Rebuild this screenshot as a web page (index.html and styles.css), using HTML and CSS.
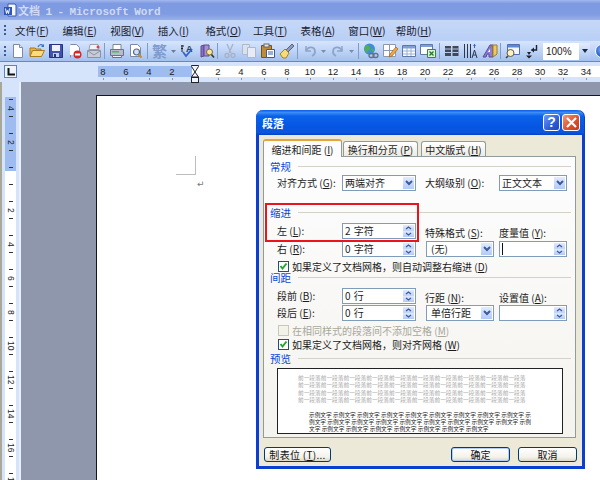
FILE: index.html
```html
<!DOCTYPE html>
<html lang="zh">
<head>
<meta charset="utf-8">
<title>文档 1 - Microsoft Word</title>
<link rel="stylesheet" href="styles.css">
</head>
<body>
<div class="word">
  <header class="titlebar">
    <svg class="app-icon" width="14" height="15" viewBox="0 0 14 15"><path d="M5 1h7l1 1v11H5z" fill="#f4f7ff" stroke="#3a5aa8"/><rect x="1" y="4" width="8" height="8" fill="#2f56b8"/><path d="M2.500 5.500l1 5 1-3 1 3 1-5" fill="none" stroke="#fff"/></svg>
    <span class="app-title">文档 1 - Microsoft Word</span>
  </header>

  <nav class="menubar">
    <span class="grip"></span>
    <span class="menu">文件(<u>F</u>)</span>
    <span class="menu">编辑(<u>E</u>)</span>
    <span class="menu">视图(<u>V</u>)</span>
    <span class="menu">插入(<u>I</u>)</span>
    <span class="menu">格式(<u>O</u>)</span>
    <span class="menu">工具(<u>T</u>)</span>
    <span class="menu">表格(<u>A</u>)</span>
    <span class="menu">窗口(<u>W</u>)</span>
    <span class="menu">帮助(<u>H</u>)</span>
  </nav>

  <div class="toolbar">
    <span class="grip grip-tool"></span>
    <span class="ic"><svg width="16" height="16" viewBox="0 0 16 16"><path d="M3.500 1.500h6l3 3v10h-9z" fill="#fff" stroke="#7c8aa8"/><path d="M9.500 1.500v3h3" fill="#dfe7f6" stroke="#7c8aa8"/></svg></span>
    <span class="ic"><svg width="16" height="16" viewBox="0 0 16 16"><path d="M1 13V5h5l1 1h5v2" fill="#e8b23c" stroke="#a87a1c"/><path d="M1 13.500l2.500-6h12l-3 6z" fill="#fbdc7c" stroke="#a87a1c"/><path d="M9 4c1-2.500 3-3 5-1.500" fill="none" stroke="#3d6fc4" stroke-width="1.300"/><path d="M15 1v3h-3z" fill="#3d6fc4"/></svg></span>
    <span class="ic"><svg width="16" height="16" viewBox="0 0 16 16"><path d="M1.500 1.500h13v13h-13z" fill="#4153ac" stroke="#27327c"/><rect x="4" y="2" width="8" height="6" fill="#eef1fb"/><rect x="5" y="10" width="6" height="4" fill="#c6cde8"/><rect x="6" y="11" width="2" height="3" fill="#27327c"/></svg></span>
    <span class="ic"><svg width="16" height="16" viewBox="0 0 16 16"><path d="M3.500 1.500h6l3 3v6h-9v4" fill="#fff" stroke="#7c8aa8"/><rect x="3" y="3" width="6" height="9" fill="#fff"/><circle cx="10.500" cy="11.500" r="4" fill="#d8282c"/><rect x="8" y="10.500" width="5" height="2" fill="#fff"/></svg></span>
    <span class="ic"><svg width="16" height="16" viewBox="0 0 16 16"><path d="M4 1.500h8l1 5H3z" fill="#f2f3f6" stroke="#9aa2b2"/><path d="M1.500 7.500h13v7h-13z" fill="#c8ccd6" stroke="#8a92a4"/><path d="M2 8l6 4 6-4" fill="none" stroke="#8a92a4"/><circle cx="12" cy="4" r="1.500" fill="#d8404c"/></svg></span>
    <span class="sp sp4"></span>
    <span class="ic"><svg width="16" height="16" viewBox="0 0 16 16"><path d="M4 1.500h8v5H4z" fill="#fff" stroke="#7f8797"/><path d="M1.500 6.500h13v6h-13z" fill="#b6bccb" stroke="#6a7284"/><rect x="3" y="8" width="7" height="1.500" fill="#4fb85c"/><path d="M3.500 12.500h9v2h-9z" fill="#eef0f5" stroke="#6a7284"/></svg></span>
    <span class="ic"><svg width="16" height="16" viewBox="0 0 16 16"><path d="M2.500 1.500h7l3 3v9h-10z" fill="#fff" stroke="#7c8aa8"/><circle cx="8.500" cy="9" r="3" fill="#cfe1f7" stroke="#5a6a88" stroke-width="1.200"/><path d="M10.500 11.500l3 3" stroke="#c98a2c" stroke-width="2"/></svg></span>
    <span class="sp"></span>
    <span class="ic ic-glyph">繁</span>
    <span class="ic-arrow"><svg width="5" height="3" viewBox="0 0 5 3"><path d="M0 0h5L2.500 3z" fill="#6a7c9c"/></svg></span>
    <span class="ic"><svg width="16" height="16" viewBox="0 0 16 16"><text x="6" y="9" class="svg-a">A</text><path d="M1 3h3M1 5.500h2M2 2v7" stroke="#222" fill="none"/><path d="M3 9l3 4 6-7" fill="none" stroke="#2f66c8" stroke-width="1.800"/></svg></span>
    <span class="ic"><svg width="16" height="16" viewBox="0 0 16 16"><path d="M2 3l3-1v11l-3 1z" fill="#8a70c0" stroke="#5d4a90"/><path d="M5 2h5v11H5z" fill="#a891d6" stroke="#5d4a90"/><circle cx="10.500" cy="9" r="3" fill="#f6e79a" stroke="#7c6a34"/><path d="M12.500 11.500l2.500 3" stroke="#333" stroke-width="1.600"/></svg></span>
    <span class="sp sp4"></span>
    <span class="ic"><svg width="16" height="16" viewBox="0 0 16 16"><path d="M5 1l4 9M11 1l-4 9" stroke="#a8b2c6" stroke-width="1.300" fill="none"/><circle cx="5" cy="12.500" r="2" fill="none" stroke="#a8b2c6" stroke-width="1.300"/><circle cx="11" cy="12.500" r="2" fill="none" stroke="#a8b2c6" stroke-width="1.300"/></svg></span>
    <span class="ic"><svg width="16" height="16" viewBox="0 0 16 16"><path d="M1.500 1.500h7v10h-7z" fill="#d9e0ee" stroke="#aeb8cb"/><path d="M6.500 4.500h8v10h-8z" fill="#e6ebf5" stroke="#aeb8cb"/></svg></span>
    <span class="ic"><svg width="16" height="16" viewBox="0 0 16 16"><path d="M1.500 2.500h10v12h-10z" fill="#c08a3c" stroke="#76541c"/><rect x="4" y="1" width="5" height="3" fill="#e7e7e7" stroke="#666"/><path d="M6.500 6.500h8v8h-8z" fill="#fff" stroke="#3f5a9c"/><path d="M8 9h5M8 11h5" stroke="#3f5a9c"/></svg></span>
    <span class="ic"><svg width="16" height="16" viewBox="0 0 16 16"><path d="M7 7l6-6 2 2-6 6z" fill="#8e9bb8" stroke="#59657f"/><path d="M1 11l5-5 4 4-3 5H4z" fill="#f6dc74" stroke="#a08428"/></svg></span>
    <span class="sp sp4"></span>
    <span class="ic"><svg width="16" height="16" viewBox="0 0 16 16"><path d="M4 3v5h5" fill="none" stroke="#8ca4c8" stroke-width="1.400"/><path d="M4 8c2-5 9-5 9 1 0 2-1 3-3 4" fill="none" stroke="#8ca4c8" stroke-width="1.800"/></svg></span>
    <span class="ic-arrow"><svg width="5" height="3" viewBox="0 0 5 3"><path d="M0 0h5L2.500 3z" fill="#7c8dab"/></svg></span>
    <span class="ic"><svg width="16" height="16" viewBox="0 0 16 16"><path d="M12 3v5H7" fill="none" stroke="#8ca4c8" stroke-width="1.400"/><path d="M12 8c-2-5-9-5-9 1 0 2 1 3 3 4" fill="none" stroke="#8ca4c8" stroke-width="1.800"/></svg></span>
    <span class="ic-arrow"><svg width="5" height="3" viewBox="0 0 5 3"><path d="M0 0h5L2.500 3z" fill="#7c8dab"/></svg></span>
    <span class="sp"></span>
    <span class="ic"><svg width="16" height="16" viewBox="0 0 16 16"><circle cx="6.500" cy="6" r="5.500" fill="#3c8fd8"/><path d="M3 2c2 1 4 0 4 3s-3 2-3 5c-2-1-3-4-1-8zM8 6c2-1 3 0 3 2-1 1-3 1-3-2z" fill="#53b04c"/><rect x="6" y="10.500" width="5" height="4" rx="2" fill="none" stroke="#66708a" stroke-width="1.300"/><rect x="10" y="10.500" width="5" height="4" rx="2" fill="none" stroke="#66708a" stroke-width="1.300"/></svg></span>
    <span class="ic"><svg width="16" height="16" viewBox="0 0 16 16"><path d="M1.500 1.500h12v12h-12z" fill="#fff" stroke="#8d98b0"/><path d="M1.500 7.500h12M7.500 1.500v12" stroke="#8d98b0"/><path d="M7 14l1-3 6-7 2 2-6 7z" fill="#f0a93c" stroke="#9c641c" stroke-width=".7"/></svg></span>
    <span class="ic"><svg width="16" height="16" viewBox="0 0 16 16"><path d="M1.500 2.500h13v11h-13z" fill="#fff" stroke="#5f78a8"/><rect x="2" y="3" width="12" height="2.500" fill="#7f9fd6"/><path d="M2 8h12M2 11h12M6 5v8M10 5v8" stroke="#9bb0d4"/></svg></span>
    <span class="ic"><svg width="16" height="16" viewBox="0 0 16 16"><path d="M.5 1.500h12v10H.5z" fill="#fff" stroke="#5f78a8"/><rect x="1" y="2" width="11" height="2" fill="#7f9fd6"/><path d="M7.500 6.500h8v8h-8z" fill="#dff0da" stroke="#2f8a3c"/><path d="M9.500 8.500l4 4M13.500 8.500l-4 4" stroke="#1f7a2c" stroke-width="1.300"/></svg></span>
    <span class="sp"></span>
    <span class="ic"><svg width="16" height="16" viewBox="0 0 16 16"><path d="M1 3h6v10H1zM8.500 3h6v10h-6z" fill="#3f4758"/><path d="M1 6h6M1 9.500h6M8.500 6h6M8.500 9.500h6" stroke="#b9c9e8"/></svg></span>
    <span class="ic"><svg width="16" height="16" viewBox="0 0 16 16"><path d="M1.500 1v14M4.500 1v14M7.500 1v14" stroke="#2c3850"/><path d="M9 15l2.500-8L14 15M10 12h3" fill="none" stroke="#2c3850"/><path d="M11.500 1v4" stroke="#2f66c8"/><path d="M10 3l1.500-2 1.500 2z" fill="#2f66c8"/></svg></span>
    <span class="ic"><svg width="16" height="16" viewBox="0 0 16 16"><path d="M1 14L8 2h3v12H7v-3H5l-1 3z" fill="#8d7ed0" stroke="#584a9c"/><path d="M8 5l3-3h4v9l-4 3V2" fill="#f0c95c" stroke="#9c7a28"/><path d="M6 9l2-3v3z" fill="#fff"/></svg></span>
    <span class="sp sp4"></span>
    <span class="ic"><svg width="16" height="16" viewBox="0 0 16 16"><path d="M2.500 1.500h12v10h-12z" fill="#f3f6fd" stroke="#4f6fb0"/><rect x="3" y="2" width="11" height="2.500" fill="#5f88d2"/><circle cx="5.500" cy="10" r="3.500" fill="#fdf2b8" stroke="#5a5a5a"/><path d="M3 13l-2 2" stroke="#444" stroke-width="1.600"/></svg></span>
    <span class="ic"><svg width="16" height="16" viewBox="0 0 16 16"><path d="M12.500 2v5H7.500" fill="none" stroke="#1c2230" stroke-width="1.400"/><path d="M10 4.500L7 7l3 2.500z" fill="#1c2230"/><path d="M3 9h4L5 12zM2 12.500h6L5 15.500z" fill="#1c2230"/></svg></span>
    <span class="combo"><span class="combo-value">100%</span><span class="combo-btn"><svg width="6" height="4" viewBox="0 0 6 4"><path d="M0 0h6L3 4z" fill="#1c2a48"/></svg></span></span>
    <span class="help-ball"></span>
  </div>

  <div class="rulerbar">
    <span class="tab-stop"><svg width="8" height="8" viewBox="0 0 8 8"><path d="M1.500 0v6.500H8" fill="none" stroke="#111" stroke-width="2"/></svg></span>
    <div class="hruler">
      <span>8</span><span>6</span><span>4</span><span>2</span><span></span><span>2</span><span>4</span><span>6</span><span>8</span><span>10</span><span>12</span><span>14</span><span>16</span><span>18</span><span>20</span><span>22</span><span>24</span><span>26</span><span>28</span><span>30</span><span>32</span><span>34</span>
    </div>
    <svg class="indent-marker" width="10" height="18" viewBox="0 0 10 18"><path d="M1.500.5h7v1L5 7 1.500 1.500z" fill="#f2f5fb" stroke="#222"/><path d="M5 7l3.500 5v0h-7z" fill="#f2f5fb" stroke="#222"/><rect x="1.500" y="12.500" width="7" height="5" fill="#f2f5fb" stroke="#222"/></svg>
  </div>

  <div class="workspace">
    <aside class="vruler">
      <span>4</span><span>2</span><span></span><span>2</span><span>4</span><span>6</span><span>8</span><span>10</span><span>12</span><span>14</span><span>16</span><span>18</span>
    </aside>
    <main class="canvas">
      <div class="page">
        <div class="margin-corner"></div>
        <div class="para-mark">↵</div>
      </div>
    </main>
  </div>
</div>

<section class="dialog">
  <header class="dlg-title">
    <span class="dlg-name">段落</span>
    <span class="cap-btn cap-help">?</span>
    <span class="cap-btn cap-close"><svg width="11" height="11" viewBox="0 0 11 11"><path d="M1 1l9 9M10 1l-9 9" stroke="#fff" stroke-width="2.200"/></svg></span>
  </header>

  <div class="tabs">
    <span class="tab tab-active">缩进和间距 (<u>I</u>)</span>
    <span class="tab tab-2">换行和分页 (<u>P</u>)</span>
    <span class="tab tab-3">中文版式 (<u>H</u>)</span>
  </div>

  <div class="panel">
    <div class="group-head group-first"><span>常规</span><i></i></div>
    <div class="form-row row-first">
      <label class="col-a">对齐方式 (<u>G</u>):</label>
      <div class="field col-b"><span>两端对齐</span><b class="drop"><svg width="8" height="6" viewBox="0 0 8 6"><path d="M1 1l3 3 3-3" fill="none" stroke="#3a5c9c" stroke-width="2"/></svg></b></div>
      <label class="col-c">大纲级别 (<u>O</u>):</label>
      <div class="field col-d"><span>正文文本</span><b class="drop"><svg width="8" height="6" viewBox="0 0 8 6"><path d="M1 1l3 3 3-3" fill="none" stroke="#3a5c9c" stroke-width="2"/></svg></b></div>
    </div>

    <div class="group-head group-indent"><span>缩进</span><i></i></div>
    <div class="form-row row-indent1">
      <label class="col-a">左 (<u>L</u>):</label>
      <div class="field col-b"><span class="num">2 字符</span><b class="spin"><svg width="7" height="4" viewBox="0 0 7 4"><path d="M1 3l2.500-2L6 3" fill="none" stroke="#3a5c9c" stroke-width="1.300"/></svg><svg width="7" height="4" viewBox="0 0 7 4"><path d="M1 1l2.500 2L6 1" fill="none" stroke="#3a5c9c" stroke-width="1.300"/></svg></b></div>
      <label class="col-c lab-end">特殊格式 (<u>S</u>):</label>
      <label class="col-d lab-end">度量值 (<u>Y</u>):</label>
    </div>
    <div class="form-row row-next">
      <label class="col-a">右 (<u>R</u>):</label>
      <div class="field col-b"><span class="num">0 字符</span><b class="spin"><svg width="7" height="4" viewBox="0 0 7 4"><path d="M1 3l2.500-2L6 3" fill="none" stroke="#3a5c9c" stroke-width="1.300"/></svg><svg width="7" height="4" viewBox="0 0 7 4"><path d="M1 1l2.500 2L6 1" fill="none" stroke="#3a5c9c" stroke-width="1.300"/></svg></b></div>
      <div class="field col-c field-short"><span class="pad">(无)</span><b class="drop"><svg width="8" height="6" viewBox="0 0 8 6"><path d="M1 1l3 3 3-3" fill="none" stroke="#3a5c9c" stroke-width="2"/></svg></b></div>
      <div class="field col-d"><span class="caret"></span><b class="spin"><svg width="7" height="4" viewBox="0 0 7 4"><path d="M1 3l2.500-2L6 3" fill="none" stroke="#3a5c9c" stroke-width="1.300"/></svg><svg width="7" height="4" viewBox="0 0 7 4"><path d="M1 1l2.500 2L6 1" fill="none" stroke="#3a5c9c" stroke-width="1.300"/></svg></b></div>
    </div>
    <div class="check check-a"><span class="box"><svg width="9" height="9" viewBox="0 0 9 9"><path d="M1.500 4l2 2.500 4-5" fill="none" stroke="#25a52b" stroke-width="2"/></svg></span>如果定义了文档网格，则自动调整右缩进 (<u>D</u>)</div>

    <div class="group-head group-spacing"><span>间距</span><i></i></div>
    <div class="form-row row-space1">
      <label class="col-a">段前 (<u>B</u>):</label>
      <div class="field col-b"><span class="num">0 行</span><b class="spin"><svg width="7" height="4" viewBox="0 0 7 4"><path d="M1 3l2.500-2L6 3" fill="none" stroke="#3a5c9c" stroke-width="1.300"/></svg><svg width="7" height="4" viewBox="0 0 7 4"><path d="M1 1l2.500 2L6 1" fill="none" stroke="#3a5c9c" stroke-width="1.300"/></svg></b></div>
      <label class="col-c lab-end">行距 (<u>N</u>):</label>
      <label class="col-d lab-end">设置值 (<u>A</u>):</label>
    </div>
    <div class="form-row">
      <label class="col-a">段后 (<u>E</u>):</label>
      <div class="field col-b"><span class="num">0 行</span><b class="spin"><svg width="7" height="4" viewBox="0 0 7 4"><path d="M1 3l2.500-2L6 3" fill="none" stroke="#3a5c9c" stroke-width="1.300"/></svg><svg width="7" height="4" viewBox="0 0 7 4"><path d="M1 1l2.500 2L6 1" fill="none" stroke="#3a5c9c" stroke-width="1.300"/></svg></b></div>
      <div class="field col-c field-short"><span class="pad">单倍行距</span><b class="drop"><svg width="8" height="6" viewBox="0 0 8 6"><path d="M1 1l3 3 3-3" fill="none" stroke="#3a5c9c" stroke-width="2"/></svg></b></div>
      <div class="field col-d"><span></span><b class="spin"><svg width="7" height="4" viewBox="0 0 7 4"><path d="M1 3l2.500-2L6 3" fill="none" stroke="#3a5c9c" stroke-width="1.300"/></svg><svg width="7" height="4" viewBox="0 0 7 4"><path d="M1 1l2.500 2L6 1" fill="none" stroke="#3a5c9c" stroke-width="1.300"/></svg></b></div>
    </div>
    <div class="check check-b check-off"><span class="box"></span>在相同样式的段落间不添加空格 (<u>M</u>)</div>
    <div class="check check-c"><span class="box"><svg width="9" height="9" viewBox="0 0 9 9"><path d="M1.500 4l2 2.500 4-5" fill="none" stroke="#25a52b" stroke-width="2"/></svg></span>如果定义了文档网格，则对齐网格 (<u>W</u>)</div>

    <div class="group-head group-preview"><span>预览</span><i></i></div>
    <div class="preview">
      <p class="prev-gray">前一段落前一段落前一段落前一段落前一段落前一段落前一段落前一段落前一段落前一段落前一段落前一段落前一段落前一段落前一段落前一段落前一段落前一段落前一段落前一段落前一段落前一段落前一段落前一段落前一段落前一段落前一段落前一段落前一段落前一段落前一段落前一段落前一段落前一段落前一段落前一段落前一段落前一段落前一段落前一段落</p>
      <p class="prev-dark">示例文字 示例文字 示例文字 示例文字 示例文字 示例文字 示例文字 示例文字 示例文字 示例文字 示例文字 示例文字 示例文字 示例文字 示例文字 示例文字 示例文字 示例文字 示例文字 示例文字 示例文字 示例文字 示例文字 示例文字 示例文字 示例文字</p>
    </div>
  </div>

  <footer class="dlg-foot">
    <button class="btn btn-tabs">制表位 (<u>T</u>)...</button>
    <button class="btn btn-default">确定</button>
    <button class="btn">取消</button>
  </footer>

  <div class="red-mark"></div>
</section>
</body>
</html>
```

FILE: styles.css
```css
* { box-sizing: border-box; }
html, body { margin: 0; padding: 0; }
body {
  width: 600px; height: 480px; overflow: hidden; position: relative;
  background: #fff; color: #1c1c1c;
  font-family: "Noto Sans CJK SC", sans-serif; font-size: 10px;
}
u { text-decoration: underline; }
.word { display: flex; flex-direction: column; height: 480px; }

.titlebar {
  height: 20px; display: flex; align-items: center; padding-left: 3px;
  background: linear-gradient(#a3b8ee 0, #7d9ae2 18%, #7f9be2 70%, #98b0ea 100%);
}
.app-icon { flex: none; }
.app-title {
  margin-left: 1px; color: #d0daf2; font-weight: bold; font-size: 11px;
  font-family: "Liberation Mono", "Noto Sans CJK SC", monospace; word-spacing: -1.200px;
}

.menubar {
  height: 21px; display: flex; align-items: center; padding-left: 4px;
  background: linear-gradient(#c6d8f8, #b9cff5);
}
.grip {
  width: 2px; height: 11px; margin-right: 9px; flex: none;
  background: repeating-linear-gradient(#3d5a94 0 2px, transparent 2px 4px);
}
.menu { width: 47.600px; flex: none; color: #1b2130; font-size: 10.500px; white-space: nowrap; }

.toolbar {
  height: 20px; display: flex; align-items: center; padding-left: 4px;
  background: linear-gradient(#d6e5fc, #bcd2f6 55%, #a4c0ec);
}
.grip-tool { margin-right: 2px; }
.ic { width: 19px; height: 18px; flex: none; display: flex; align-items: center; justify-content: center; }
.ic-glyph { font-size: 15px; line-height: 18px; color: #7f9bcf; font-weight: 700; }
.ic-arrow { width: 9px; flex: none; display: flex; align-items: center; justify-content: center; }
.sp { width: 5px; height: 16px; flex: none; position: relative; }
.sp::after { content: ""; position: absolute; left: 2px; top: 0; width: 1px; height: 16px; background: #7f9bc9; }
.sp4 { width: 4px; }
.sp4::after { left: 1px; }
.svg-a { font: bold 9px "Liberation Sans", sans-serif; fill: #2c3a5c; }
.combo {
  width: 47px; height: 17px; margin-left: 2px; flex: none;
  display: flex; background: #fff;
}
.combo-value { flex: 1; padding-left: 3px; font: 10px/17px "Liberation Sans", sans-serif; color: #222; }
.combo-btn {
  width: 11px; display: flex; align-items: center; justify-content: center;
  background: linear-gradient(#e2ecfd, #a9c4f0);
}
.help-ball {
  width: 14px; height: 14px; margin-left: 5px; flex: none; border-radius: 50%;
  background: radial-gradient(circle at 45% 40%, #7eb2f4, #1c59c8 70%); border: 1px solid #fff;
}

.rulerbar {
  height: 21px; display: flex; position: relative; padding-left: 4px;
  background: #d5e4fb; border-top: 1px solid #8f8468;
}
.tab-stop {
  width: 13px; height: 13px; margin-top: 3px; flex: none;
  display: flex; align-items: center; justify-content: center;
  background: #eef4fe; border: 1px solid #5c83c8;
}
.hruler {
  flex: 1; margin-left: 81px; height: 11px; margin-top: 4px; padding-left: 0;
  display: flex; background: linear-gradient(to right, #9fbcf0 94px, #fff 94px);
}
.hruler span {
  width: 23px; flex: none; margin-left: 0; position: relative; left: -6.500px;
  text-align: center; font: 9.500px/11px "Liberation Sans", sans-serif; color: #222;
}
.hruler span::after {
  content: ""; position: absolute; left: 11px; top: 12px; width: 1px; height: 2px; background: #8996ad;
}
.indent-marker { position: absolute; left: 190px; top: 3px; }

.workspace { flex: 1; display: flex; min-height: 0; }
.vruler {
  width: 21px; flex: none; padding: 0 0 0 5px; overflow: hidden;
  background: #d5e4fb; border-left: 2px solid #a9a798; border-right: 2px solid #e8f0fd;
  display: flex; flex-direction: column; position: relative;
}
.vruler::before {
  content: ""; position: absolute; left: 3px; top: 15px; bottom: 0; width: 11px;
  background: linear-gradient(#9fbcf0 74px, #fff 74px);
}
.vruler span {
  height: 34px; flex: none; width: 10px; margin-left: -1px; position: relative;
  display: flex; align-items: center; justify-content: center;
  writing-mode: vertical-rl; font: 8.500px/10px "Liberation Sans", sans-serif; color: #222;
}
.vruler span:first-child { margin-top: 9px; }
.vruler span::before, .vruler span::after {
  content: ""; position: absolute; left: 3px; width: 4px; height: 1px; background: #333;
}
.vruler span::before { top: 8px; }
.vruler span::after { top: 25px; }

.canvas { flex: 1; background: #8e97ac; padding: 13px 0 0 75px; min-width: 0; overflow: hidden; }
.page {
  height: 100%; background: #fff; border-left: 1px solid #14161c; border-top: 1px solid #14161c;
  padding: 60px 0 0 79px;
}
.margin-corner { width: 20px; height: 19px; border-right: 1px solid #bdbdbd; border-bottom: 1px solid #bdbdbd; }
.para-mark { margin: 3px 0 0 21px; font: 9px/12px "DejaVu Sans", sans-serif; color: #777; }

.dialog {
  position: absolute; left: 256px; top: 110px; width: 329px; height: 359px;
  background: #ece9d8; border: 3px solid #0a3fd2; border-top: 0;
  border-radius: 7px 7px 0 0; padding: 0 5px 0 4px;
}
.dlg-title {
  height: 25px; margin: 0 -7px 0 -7px; padding: 0 4px 0 6px;
  display: flex; align-items: center; gap: 2px;
  border-radius: 7px 7px 0 0;
  background: linear-gradient(#0a5ae8 0, #3b8cf6 10%, #0a62ea 24%, #0655e2 70%, #0a56dc 90%, #0440c8 100%);
}
.dlg-name { flex: 1; color: #fff; font-weight: 700; font-size: 11px; }
.cap-btn {
  width: 17px; height: 17px; border: 1px solid #fff; border-radius: 3px;
  display: flex; align-items: center; justify-content: center;
  color: #fff; font: bold 14px/15px "Liberation Sans", sans-serif;
}
.cap-help { background: linear-gradient(135deg, #6f9bf2, #2d5fd8 60%, #1c47c0); }
.cap-close { width: 18px; background: linear-gradient(135deg, #f09a7c, #e0512e 55%, #c53a1a); }

.tabs { display: flex; align-items: flex-end; height: 21px; margin-top: 0; padding-top: 4px; position: relative; z-index: 1; }
.tab {
  height: 15px; border: 1px solid #919b9c; border-bottom: 0; border-radius: 3px 3px 0 0;
  background: linear-gradient(#fff, #ecebe3); display: flex; align-items: center; justify-content: center;
  white-space: nowrap; font-size: 10px;
}
.tab-active {
  width: 79px; height: 18px; margin-bottom: -1px; background: #fcfcfc;
  border-top: 2px solid #e8a33a;
}
.tab-2 { width: 75px; margin-left: 1px; }
.tab-3 { width: 65px; margin-left: 3px; }

.panel {
  width: 313px; height: 282px; border: 1px solid #919b9c;
  background: linear-gradient(#fdfdfe, #f4f3ee); overflow: hidden;
}
.group-head { display: flex; align-items: center; height: 12px; padding: 0 4px 0 6px; color: #0a46d8; font-size: 10.500px; }
.group-head span { width: 28px; flex: none; }
.group-head i { flex: 1; height: 1px; background: #d4d2c8; }
.group-first { margin-top: 3px; }
.group-indent { margin-top: 15px; }
.group-spacing { margin-top: -1px; }
.group-preview { margin-top: 2px; }

.form-row {
  display: grid; grid-template-columns: 65px 74px 9px 74px 68px;
  height: 17px; margin-left: 13px; align-items: center;
}
.row-first { margin-top: 2px; }
.row-indent1 { margin-top: 4px; }
.row-next { margin-top: 1px; }
.row-space1 { margin-top: 4px; }
.col-a { grid-column: 1; }
.col-b { grid-column: 2; }
.col-c { grid-column: 4; }
.col-d { grid-column: 5; }
label { white-space: nowrap; font-size: 10px; line-height: 14px; }
.lab-end { align-self: end; line-height: 12px; }

.field {
  height: 16px; display: flex; align-items: stretch; background: #fff;
  border: 1px solid #7f9db9; font-size: 10px; line-height: 14px;
}
.field > span { flex: 1; padding-left: 2px; white-space: nowrap; }
.field .num { padding-left: 2px; word-spacing: 1px; }
.field .pad { padding-left: 4px; }
.field .caret { flex: 1; position: relative; }
.field .caret::after { content: ""; position: absolute; left: 2px; top: 1px; width: 1px; height: 12px; background: #111; }
.field-short { width: 68px; margin-left: 1px; }
.drop {
  width: 13px; flex: none; display: flex; align-items: center; justify-content: center;
  background: linear-gradient(#e3ebfd, #b3caf6); border: 1px solid #fff;
}
.spin {
  width: 13px; flex: none; display: flex; flex-direction: column; align-items: center; justify-content: space-around;
  background: linear-gradient(#e3ebfd, #c0d2f7 45%, #e0e9fc 50%, #b3caf6); border: 1px solid #fff;
}

.check { display: flex; align-items: center; height: 12px; padding-left: 14px; white-space: nowrap; font-size: 10px; }
.check-a { margin-top: 3px; }
.check-b { margin-top: 3px; color: #a8a79a; }
.check-c { margin-top: 2px; }
.box {
  width: 11px; height: 11px; margin-right: 3px; flex: none; background: #fff;
  border: 1px solid #1c5180; display: flex; align-items: center; justify-content: center;
}
.check-off .box { background: #f4f3ea; border-color: #cac8bb; }

.preview {
  width: 286px; height: 66px; margin: 4px 0 0 13px; padding: 5px 0 0 20px;
  background: #fff; border: 1px solid #222; overflow: hidden;
}
.preview p {
  margin: 0; width: 232px; font-size: 5.700px; line-height: 7.300px;
  word-break: break-all;
}
.prev-gray { height: 36.500px; overflow: hidden; color: #a9a9a9; }
.prev-dark { color: #222; padding-left: 11px; width: 234px !important; }

.dlg-foot { display: flex; gap: 8px; margin: 9px 0 0 1px; }
.btn {
  width: 59px; height: 15px; padding: 0; font: inherit; line-height: 13px; color: #111;
  border: 1px solid #003c74; border-radius: 3px;
  background: linear-gradient(#fff, #f3f2ea 70%, #dcd8c8);
}
.btn-tabs { width: 67px; margin-right: auto; letter-spacing: .3px; }
.btn-default { box-shadow: inset 0 0 0 1px #b5cdf3; }

.red-mark {
  position: absolute; left: 6px; top: 93px; width: 154px; height: 39px;
  border: 2px solid #e9141c;
}
```
